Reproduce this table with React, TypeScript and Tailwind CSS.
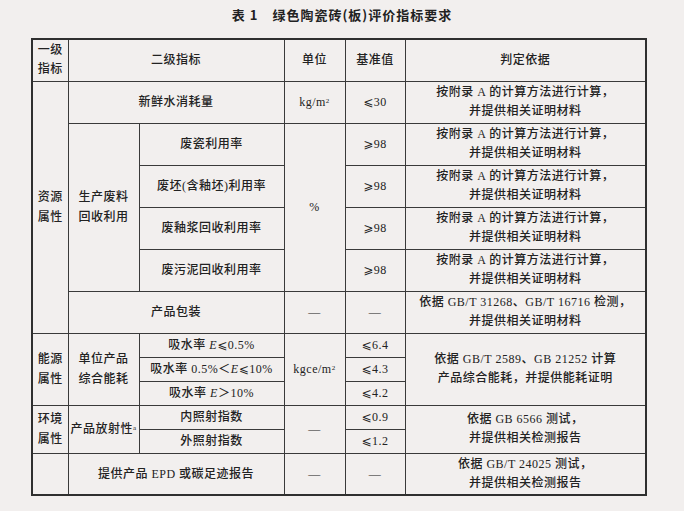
import React from "react";

const cell = "border border-[#3a3a3a] text-center align-middle p-0";

function Le({ children }: { children: React.ReactNode }) {
  return (
    <span>
      <span className="font-['DejaVu_Sans',sans-serif] text-[12px]">⩽</span>
      {children}
    </span>
  );
}

function Ge({ children }: { children: React.ReactNode }) {
  return (
    <span>
      <span className="font-['DejaVu_Sans',sans-serif] text-[12px]">⩾</span>
      {children}
    </span>
  );
}

function Two({ a, b }: { a: string; b: string }) {
  return (
    <div className="leading-[19px]">
      <div>{a}</div>
      <div>{b}</div>
    </div>
  );
}

export default function App() {
  return (
    <div className="w-[684px] h-[511px] overflow-hidden bg-[#f2efee] text-[#222] font-['Liberation_Serif','Noto_Sans_CJK_SC',serif]">
      {/* Title */}
      <div className="pt-[6px] h-[24px] text-center text-[13px] leading-[18px] font-bold tracking-[1px] font-['Noto_Sans_CJK_SC',sans-serif]">
        表 1　绿色陶瓷砖(板)评价指标要求
      </div>

      {/* Table */}
      <div className="mt-[14px] ml-[31px]">
        <table className="w-[614px] table-fixed border-collapse border-2 border-[#2f2f2f] text-[12px] font-medium tracking-[0.5px]">
          <colgroup>
            <col className="w-[36px]" />
            <col className="w-[71px]" />
            <col className="w-[145px]" />
            <col className="w-[61px]" />
            <col className="w-[60px]" />
            <col className="w-[241px]" />
          </colgroup>
          <tbody>
            <tr className="h-[42px]">
              <td className={cell}>
                <div className="leading-[19px]">一级<br />指标</div>
              </td>
              <td className={cell} colSpan={2}>二级指标</td>
              <td className={cell}>单位</td>
              <td className={cell}>基准值</td>
              <td className={cell}>判定依据</td>
            </tr>

            {/* 资源属性 */}
            <tr className="h-[42px]">
              <td className={cell} rowSpan={6}>
                <div className="leading-[20px]">资源<br />属性</div>
              </td>
              <td className={cell} colSpan={2}>新鲜水消耗量</td>
              <td className={cell}>
                kg/m<sup className="text-[7px]">2</sup>
              </td>
              <td className={cell}><Le>30</Le></td>
              <td className={cell}>
                <Two a="按附录 A 的计算方法进行计算，" b="并提供相关证明材料" />
              </td>
            </tr>
            <tr className="h-[42px]">
              <td className={cell} rowSpan={4}>
                <div className="leading-[20px]">生产废料<br />回收利用</div>
              </td>
              <td className={cell}>废瓷利用率</td>
              <td className={cell} rowSpan={4}>%</td>
              <td className={cell}><Ge>98</Ge></td>
              <td className={cell}>
                <Two a="按附录 A 的计算方法进行计算，" b="并提供相关证明材料" />
              </td>
            </tr>
            <tr className="h-[42px]">
              <td className={cell}>废坯(含釉坯)利用率</td>
              <td className={cell}><Ge>98</Ge></td>
              <td className={cell}>
                <Two a="按附录 A 的计算方法进行计算，" b="并提供相关证明材料" />
              </td>
            </tr>
            <tr className="h-[42px]">
              <td className={cell}>废釉浆回收利用率</td>
              <td className={cell}><Ge>98</Ge></td>
              <td className={cell}>
                <Two a="按附录 A 的计算方法进行计算，" b="并提供相关证明材料" />
              </td>
            </tr>
            <tr className="h-[42px]">
              <td className={cell}>废污泥回收利用率</td>
              <td className={cell}><Ge>98</Ge></td>
              <td className={cell}>
                <Two a="按附录 A 的计算方法进行计算，" b="并提供相关证明材料" />
              </td>
            </tr>
            <tr className="h-[42px]">
              <td className={cell} colSpan={2}>产品包装</td>
              <td className={cell}>—</td>
              <td className={cell}>—</td>
              <td className={cell}>
                <Two a="依据 GB/T 31268、GB/T 16716 检测，" b="并提供相关证明材料" />
              </td>
            </tr>

            {/* 能源属性 */}
            <tr className="h-[24px]">
              <td className={cell} rowSpan={3}>
                <div className="leading-[20px]">能源<br />属性</div>
              </td>
              <td className={cell} rowSpan={3}>
                <div className="leading-[20px]">单位产品<br />综合能耗</div>
              </td>
              <td className={cell}>吸水率 <i>E</i><Le>0.5%</Le></td>
              <td className={cell} rowSpan={3}>
                kgce/m<sup className="text-[7px]">2</sup>
              </td>
              <td className={cell}><Le>6.4</Le></td>
              <td className={cell} rowSpan={3}>
                <Two a="依据 GB/T 2589、GB 21252 计算" b="产品综合能耗，并提供能耗证明" />
              </td>
            </tr>
            <tr className="h-[24px]">
              <td className={cell}>吸水率 0.5%＜<i>E</i><Le>10%</Le></td>
              <td className={cell}><Le>4.3</Le></td>
            </tr>
            <tr className="h-[24px]">
              <td className={cell}>吸水率 <i>E</i>＞10%</td>
              <td className={cell}><Le>4.2</Le></td>
            </tr>

            {/* 环境属性 */}
            <tr className="h-[24px]">
              <td className={cell} rowSpan={2}>
                <div className="leading-[20px]">环境<br />属性</div>
              </td>
              <td className={cell} rowSpan={2}>
                产品放射性<sup className="text-[7px]">a</sup>
              </td>
              <td className={cell}>内照射指数</td>
              <td className={cell} rowSpan={2}>—</td>
              <td className={cell}><Le>0.9</Le></td>
              <td className={cell} rowSpan={2}>
                <Two a="依据 GB 6566 测试，" b="并提供相关检测报告" />
              </td>
            </tr>
            <tr className="h-[24px]">
              <td className={cell}>外照射指数</td>
              <td className={cell}><Le>1.2</Le></td>
            </tr>

            <tr className="h-[42px]">
              <td className={cell}></td>
              <td className={cell} colSpan={2}>提供产品 EPD 或碳足迹报告</td>
              <td className={cell}>—</td>
              <td className={cell}>—</td>
              <td className={cell}>
                <Two a="依据 GB/T 24025 测试，" b="并提供相关检测报告" />
              </td>
            </tr>
          </tbody>
        </table>
      </div>
    </div>
  );
}
